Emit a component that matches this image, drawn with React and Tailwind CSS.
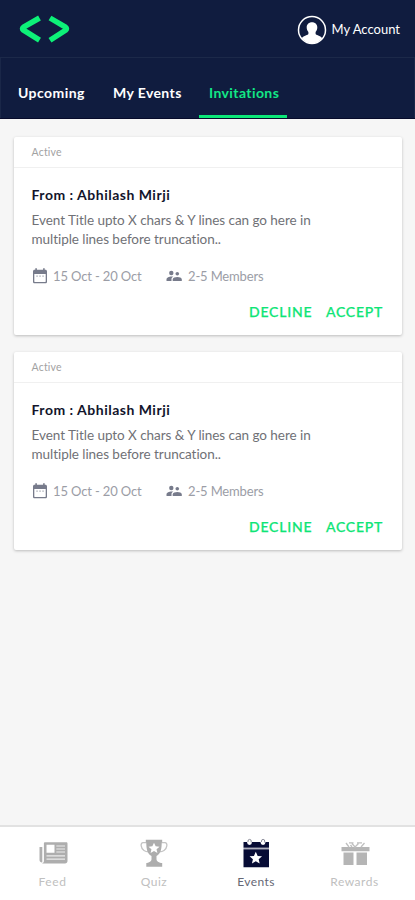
import React from "react";

const STAR = "M0 -5 L1.5 -1.7 L5 -1.4 L2.3 0.9 L3.1 4.4 L0 2.6 L-3.1 4.4 L-2.3 0.9 L-5 -1.4 L-1.5 -1.7 Z";

function Logo() {
  return (
    <svg width="52" height="30" viewBox="0 0 52 30" fill="none" stroke="#0df178" strokeWidth="5.5" strokeLinejoin="round">
      <path d="M21.500 4 L5.500 13.200 Q3.500 14.700 5.500 16.200 L21.500 26.200" />
      <path d="M32 4 L47.500 13.200 Q49.500 14.700 47.500 16.200 L32 26.200" />
    </svg>
  );
}

function Avatar() {
  return (
    <svg width="30" height="30" viewBox="0 0 30 30">
      <circle cx="15" cy="15" r="13.5" fill="none" stroke="#fff" strokeWidth="1.5" />
      <path d="M15 7.200c3.200 0 5.300 2.200 5.300 5.200 0 1.700-.7 3.400-1.700 4.500v2.200c0 .8 4.800 1.600 6.600 4.200A13 13 0 0 1 15 28.300 13 13 0 0 1 4.800 23.300c1.800-2.600 6.600-3.400 6.600-4.200v-2.200c-1-1.100-1.700-2.800-1.700-4.500 0-3 2.100-5.200 5.300-5.200z" fill="#fff" />
    </svg>
  );
}

function CalendarIcon() {
  return (
    <svg className="shrink-0" width="14" height="16" viewBox="0 0 14 16" fill="#777b8b">
      <path fillRule="evenodd" d="M2.300 0.300h1.600v1.500h6.200V0.300h1.600v1.500h.7c.9 0 1.600.7 1.600 1.600v10.300c0 .9-.7 1.600-1.600 1.600H1.600C.7 15.300 0 14.600 0 13.700V3.400C0 2.500.7 1.800 1.600 1.800h.7zM1.300 6v7.500c0 .3.200.5.500.5h10.400c.3 0 .5-.2.500-.5V6z" />
      <path d="M3.300 7.500h1.500v1.300H3.300zM6.300 7.500h1.500v1.300H6.300zM9.300 7.500h1.500v1.300H9.300z" opacity=".6" />
    </svg>
  );
}

function MembersIcon() {
  return (
    <svg className="shrink-0" width="16" height="12" viewBox="0 0 16 12" fill="#777b8b">
      <circle cx="5.300" cy="3" r="2.200" />
      <circle cx="11.300" cy="3.800" r="1.800" />
      <path d="M0.500 11V9.300c0-1.900 2.700-2.900 5-2.900.7 0 1.300.1 1.900.2-1.200.7-1.900 1.500-1.900 2.700V11z" />
      <path d="M6.700 11V9.500c0-1.600 2.600-2.400 4.600-2.400s4.500.8 4.500 2.400V11z" />
    </svg>
  );
}

function FeedIcon() {
  return (
    <svg width="30" height="30" viewBox="0 0 30 30">
      <path d="M1.500 9h2.800v15.500H4c-1.500 0-2.500-1-2.500-2.500z" fill="#b0b0b0" />
      <path fillRule="evenodd" fill="#aeaeae" d="M7.200 4.200h21c.8 0 1.300.5 1.300 1.300v17.500c0 1.500-1 2.500-2.500 2.500H4c1.300-.5 1.900-1.300 1.900-2.500V5.500c0-.8.500-1.300 1.300-1.300zM8.500 6.800v8h8v-8z" />
      <path d="M18.300 8h8.700M18.300 11h8.700M18.300 14h8.700M8.500 17.800h18.500M8.500 21.200h18.500" stroke="#ececec" strokeWidth="1.200" />
    </svg>
  );
}

function TrophyIcon() {
  return (
    <svg width="30" height="30" viewBox="0 0 30 30" fill="#adadad">
      <path d="M8 4.700H4C1.200 4.700 1.500 10 5 12.500c1.300.9 3 1.300 4.500 1.300M22 4.700h4c2.800 0 2.500 5.300-1 7.800-1.300.9-3 1.300-4.500 1.300" fill="none" stroke="#c4c4c4" strokeWidth="1.300" />
      <path d="M6.800 1.800h16.400v2.300h-.5c0 7.200-.8 11.200-5.200 14v3.400c0 1.900 2.500 2.900 4.500 3.400h1.200v3.800H7.300v-3.800H8c2-.5 4.500-1.500 4.500-3.400v-3.400c-4.400-2.800-5.200-6.800-5.200-14h-.5z" />
      <path d={STAR} transform="translate(15 10.200) scale(1.100)" fill="#fff" />
    </svg>
  );
}

function EventsIcon() {
  return (
    <svg width="30" height="30" viewBox="0 0 30 30">
      <path d="M2.500 4h25.500v5.800H2.500zM2.500 11.200h25.500v18H2.500z" fill="#070c35" />
      <path d="M2.500 10.500h25.500" stroke="#aeb0bd" strokeWidth="1.200" />
      <circle cx="8.500" cy="4.600" r="2.400" fill="#fff" />
      <circle cx="22" cy="4.600" r="2.400" fill="#fff" />
      <path d="M7 4V3a1.600 1.600 0 0 1 3.200 0v1.500M20.500 4V3a1.600 1.600 0 0 1 3.200 0v1.500" fill="none" stroke="#8b8c99" strokeWidth="1" />
      <path d={STAR} transform="translate(14.800 20) scale(1.250)" fill="#fff" />
    </svg>
  );
}

function GiftIcon() {
  return (
    <svg width="30" height="30" viewBox="0 0 30 30" fill="#b5b5b5">
      <path d="M1.500 9h28v4.300h-28zM3.500 14.500h10v12.500h-10zM16.500 14.500H27v12.500H16.500z" />
      <path d="M9 9 L6 5 M9 4.800h4.500 M12 5.500 L15 9 L18.500 5.500 M17 4.800h5 M21 9 L24.500 5 M10.500 7 L12 9" fill="none" stroke="#c0c0c0" strokeWidth="1.300" />
    </svg>
  );
}

function InvitationCard() {
  return (
    <article className="h-[198px] rounded-[2px] bg-white shadow-[0_1px_3px_rgba(0,0,0,0.24)]">
      <div className="flex h-[31px] items-center border-b border-[#f0f0f0] pt-[2px] pl-[17.500px] text-[10.500px] tracking-[0.200px] text-[#a2a2a2]">Active</div>
      <div className="px-[17px]">
        <h2 className="mt-[17px] h-5 pl-[0.500px] text-[14px] leading-5 font-bold whitespace-nowrap tracking-[0.500px] text-[#12142b]">From : Abhilash Mirji</h2>
        <p className="mt-[6px] pl-[0.500px] text-[13.500px] leading-[19.400px] whitespace-nowrap text-[#707176] [font-variant-ligatures:none]">
          <span className="block tracking-[-0.050px]">Event Title upto X chars &amp; Y lines can go here in</span>
          <span className="block tracking-[-0.050px]">multiple lines before truncation..</span>
        </p>
        <div className="mt-4 flex h-5 items-center text-[13px] leading-5 whitespace-nowrap text-[#9b9da6]">
          <div className="ml-[2px] flex w-[133px] items-center gap-[6px] tracking-[-0.140px]">
            <CalendarIcon />
            <span>15 Oct - 20 Oct</span>
          </div>
          <div className="flex items-center gap-[6px] tracking-[-0.150px]">
            <MembersIcon />
            <span>2-5 Members</span>
          </div>
        </div>
        <div className="mt-4 flex justify-end gap-[13.500px] pr-[2px] text-[14px] leading-5 font-medium text-[#0ee576] [-webkit-text-stroke:0.250px_#0ee576]">
          <button className="tracking-[0.800px]">DECLINE</button>
          <button className="tracking-[0.750px]">ACCEPT</button>
        </div>
      </div>
    </article>
  );
}

export default function App() {
  return (
    <div className="flex h-[900px] w-[415px] flex-col overflow-hidden bg-[#f6f6f6] font-['Lato',sans-serif]">
      <header className="h-[119px] shrink-0 border-b border-[#070b2b] bg-[#101c3f] text-white">
        <div className="flex h-[58px] items-center justify-between border-b border-[#1c2949] pr-[15px] pl-[18px]">
          <Logo />
          <div className="flex items-center gap-[5px] pt-[2px] text-[13px] tracking-[0px]">
            <Avatar />
            <span>My Account</span>
          </div>
        </div>
        <nav className="flex h-[60px] border-x border-[#1a2748] text-[14px] leading-5 font-bold whitespace-nowrap">
          <div className="w-[95px] pt-[25px] pl-[17px] tracking-[0.450px]">Upcoming</div>
          <div className="w-[103px] pt-[25px] pl-[17px] tracking-[0.400px]">My Events</div>
          <div className="w-[88px] border-b-[3px] border-[#0ce878] pt-[25px] pl-[10px] tracking-[0.400px] text-[#12e886]">Invitations</div>
        </nav>
      </header>
      <main className="flex flex-1 flex-col gap-[17px] pt-[18px] pr-[13px] pl-[14px]">
        <InvitationCard />
        <InvitationCard />
      </main>
      <footer className="flex h-[75px] shrink-0 border-t-2 border-[#e2e2e2] bg-white pt-[11px] pl-[2px] text-[12px] leading-5 text-[#c0c0c0]">
        <div className="flex w-[101px] flex-col items-center gap-[4px] tracking-[0.600px]"><FeedIcon /><span>Feed</span></div>
        <div className="flex w-[102px] flex-col items-center gap-[4px] tracking-[0.500px]"><TrophyIcon /><span>Quiz</span></div>
        <div className="flex w-[102px] flex-col items-center gap-[4px] tracking-[0.400px] text-[#666774]"><EventsIcon /><span>Events</span></div>
        <div className="flex w-[95px] flex-col items-center gap-[4px] tracking-[0.500px]"><GiftIcon /><span>Rewards</span></div>
      </footer>
    </div>
  );
}
